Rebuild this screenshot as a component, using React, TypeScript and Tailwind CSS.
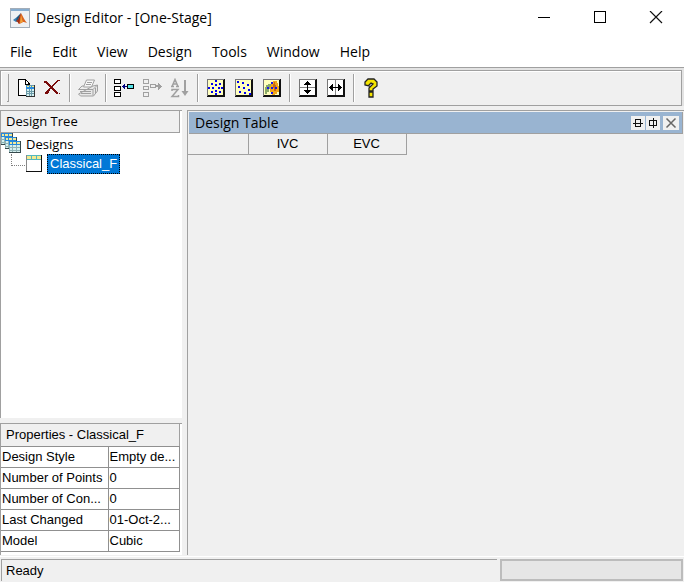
import type { ReactNode } from 'react';

const UI = "font-['Open_Sans','Noto_Sans',sans-serif]";
const ARIAL = "font-['Liberation_Sans',Arial,sans-serif]";

function Art({ children, size = 20, className = '' }: { children: ReactNode; size?: number; className?: string }) {
  return (
    <svg width={size} height={size} viewBox={`0 0 ${size} ${size}`} fill="none" shapeRendering="crispEdges" className={`shrink-0 ${className}`} aria-hidden="true">
      {children}
    </svg>
  );
}

function MatlabLogo() {
  return (
    <svg width="20" height="20" viewBox="0 0 20 20" className="shrink-0" aria-hidden="true">
      <rect x=".5" y=".5" width="19" height="19" fill="#eef1f4" stroke="#a3adb8" />
      <path d="M1 1h18v2H1z" fill="#86add0" />
      <path d="M3 12l4-3 2 2-3 3z" fill="#397fb5" />
      <path d="M7 9l4-4-1 5-3 4-1-1z" fill="#23577d" />
      <path d="M11 5c2 3 3 7 6 10-2-1-3-1-4-1-1 1-2 1-4 2-1-2-2-3-3-3 2 0 3-3 5-8z" fill="#db6421" />
      <path d="M11 5c-1 4-1 7-2 11-1-2-2-3-3-3 2 0 3-3 5-8z" fill="#9d2c18" />
      <path d="M11 7c1 3 1 5 2 7l-3 1z" fill="#f0a43a" />
    </svg>
  );
}

const NewIcon = () => (
  <Art>
    <path d="M2 1h8v1h1v1h1v1h1v1h1v13H2z" fill="#000" />
    <path d="M3 2h6v5h4v10H3z" fill="#fff" />
    <path d="M10 3h1v1h1v2h-2z" fill="#fff" />
    <path d="M10 7h9v12h-9z" fill="#333" />
    <path d="M10 7h8v11h-8z" fill="#6b9aa8" />
    <path d="M10 8h8v3h-8z" fill="#2d8fe0" />
    <path d="M11 11h2v2h-2zM14 11h1v2h-1zM16 11h2v2h-2zM11 14h2v1h-2zM14 14h1v1h-1zM16 14h2v1h-2zM11 16h2v2h-2zM14 16h1v2h-1zM16 16h2v2h-2z" fill="#d6f0f0" />
    <path d="M11 8h2v1h-2zM14 8h1v1h-1zM16 8h2v1h-2z" fill="#ffee8a" />
  </Art>
);

const DeleteIcon = () => (
  <Art>
    <path d="M2 3h3v1h1v1h1v1h1v1h1v1h1v1h1v1h1v1h1v1h1v1h1v1h1v2h-2v-1h-1v-1h-1v-1h-1v-1h-1v-1h-1v-1H8V9H7V8H6V7H5V6H4V5H2zM15 2h3v1h-2v1h-1v1h-1v1h-1v1h-1v1h-1v1h-1v1H9v1H8v2H7v2H6v1H3v-2h1v-1h1v-1h1v-1h1v-1h1V9h1V8h1V7h1V6h1V5h1V4h1V3h1z" fill="#780a0a" />
    <path d="M17 15h1v1h-1z" fill="#780a0a" />
  </Art>
);

const PrintIcon = () => (
  <svg width="20" height="20" viewBox="0 0 20 20" fill="none" stroke="#a0a0a0" className="shrink-0" aria-hidden="true">
    <path d="M5.500 9l3-7h8l-3 7z" fill="#f8f8f8" />
    <path d="M9 4.500h5M8 6.500h5" />
    <path d="M.5 11.500L4 8h2M15 8l4.500-1v6l-4 5h-13l-2-2z" fill="#e8e8e8" />
    <path d="M.5 11.500H15l4.500-4.500M15 11.500v6M2 13.500h11M3 15.500h10M17.500 10v5" />
  </svg>
);

const MergeIcon = () => (
  <Art>
    <path d="M0 1h7v5H0zM0 8h7v5H0zM0 14h7v5H0zM13 6h7v5h-7z" fill="#000" />
    <path d="M1 2h5v3H1zM1 9h5v3H1zM1 15h5v3H1z" fill="#fff" />
    <path d="M14 7h5v3h-5z" fill="#54e2e8" />
    <path d="M8 8h1V7h1V6h1v2h2v1h-2v2h-1v-1H9V9H8z" fill="#000080" />
  </Art>
);

const SplitIcon = () => (
  <Art>
    <path d="M1.500 1.500h5v4h-5zM1.500 8.500h5v3h-5zM1.500 14.500h5v4h-5zM8.500 6.500h5v3h-5z" stroke="#a0a0a0" />
    <path d="M14 7h2V5h1v1h1v1h1v1h1v1h-1v1h-1v1h-1v1h-1V9h-2z" fill="#a0a0a0" />
  </Art>
);

const SortIcon = () => (
  <svg width="20" height="20" viewBox="0 0 20 20" fill="none" stroke="#a0a0a0" strokeWidth="1.500" className="shrink-0" aria-hidden="true">
    <path d="M2 8.500L5 1.500l3 7M3 6h4M1 8.500h3M6 8.500h3M2 13v-1.500h6L2 18.500h6.500V17" />
    <path d="M15 2v12" strokeWidth="2" />
    <path d="M11.500 13h7L15 18z" fill="#a0a0a0" stroke="none" />
  </svg>
);

function Tile({ children, fill = '#ffffbe' }: { children: ReactNode; fill?: string }) {
  return (
    <Art>
      <path d="M1 1h18v18H1z" fill="#111" />
      <path d="M1 1h17v1H2v16H1z" fill="#777" />
      <path d="M2 2h15v15H2z" fill={fill} />
      {children}
    </Art>
  );
}

const GridPointsIcon = () => (
  <Tile>
    <path d="M9 2h2v2H9zM5 5h2v2H5zM13 5h2v2h-2zM9 6h2v2H9zM2 9h2v2H2zM6 9h2v2H6zM12 9h2v2h-2zM15 9h2v2h-2zM9 12h2v2H9zM5 13h2v2H5zM13 13h2v2h-2zM9 15h2v2H9z" fill="#0000f0" />
  </Tile>
);
const ScatterPointsIcon = () => (
  <Tile>
    <path d="M3 3h2v2H3zM8 4h2v2H8zM13 6h2v2h-2zM4 8h2v2H4zM9 9h2v2H9zM14 11h2v2h-2zM5 13h2v2H5zM10 14h2v2h-2zM15 15h2v2h-2z" fill="#0000f0" />
  </Tile>
);
const OptimalPointsIcon = () => (
  <Tile>
    <path d="M9 4h2V3h4v2h1v3h1v6h-2v2h-2v1h-3v-3H8V8h1z" fill="#f2a719" />
    <path d="M3 9h1V7h2V6h3v2H8v3H7v3H5v2H3z" fill="#8aa967" />
    <path d="M12 4h1v3h1v6h-2v-3h-1V6h1z" fill="#c96a12" />
    <path d="M9 4h2v2H9zM5 9h2v2H5zM9 9h2v2H9zM13 9h2v2h-2zM9 14h2v2H9z" fill="#1616e8" />
  </Tile>
);

const SplitVerticalIcon = () => (
  <Tile fill="#fff">
    <path d="M2 9h15v1H2z" fill="#888" />
    <path d="M9 3h1v1h1v1h1v1h1v1h-3v5h3v1h-1v1h-1v1h-1v1H9v-1H8v-1H7v-1H6v-1h3V7H6V6h1V5h1V4h1z" fill="#000" />
  </Tile>
);
const SplitHorizontalIcon = () => (
  <Tile fill="#fff">
    <path d="M9 2h1v15H9z" fill="#888" />
    <path d="M3 9h1V8h1V7h1V6h1v3h5V6h1v1h1v1h1v1h1v1h-1v1h-1v1h-1v1h-1v-3H7v3H6v-1H5v-1H4v-1H3z" fill="#000" />
  </Tile>
);

const HelpIcon = () => (
  <svg width="20" height="20" viewBox="0 0 20 20" fill="none" className="shrink-0" aria-hidden="true">
    <path d="M3 7V4l3-3h6l3 3v4l-4 3v2H7v-3l4-4-2-1-2 2v1zM7 14h4v5H7z" fill="#f5e400" stroke="#222" strokeWidth="1.300" />
  </svg>
);

function TableGlyph({ x, y }: { x: number; y: number }) {
  return (
    <g transform={`translate(${x} ${y})`}>
      <path d="M0 0h12v12H0z" fill="#35484b" />
      <path d="M0 0h11v11H0z" fill="#8fb2b5" />
      <path d="M0 0h11v4H0z" fill="#2689dc" />
      <path d="M1 1h2v2H1zM4 1h3v2H4zM8 1h3v2H8z" fill="#f3e998" />
      <path d="M1 4h2v2H1zM4 4h3v2H4zM8 4h3v2H8zM1 7h2v2H1zM4 7h3v2H4zM8 7h3v2H8zM1 10h2v1H1zM4 10h3v1H4zM8 10h3v1H8z" fill="#d6f0f0" />
    </g>
  );
}

function ToolButton({ label, disabled, children }: { label: string; disabled?: boolean; children: ReactNode }) {
  return (
    <button type="button" aria-label={label} disabled={disabled} className="flex h-7 w-7 items-center justify-center">
      {children}
    </button>
  );
}

const Separator = () => <span className="mx-[3px] h-7 w-0.5 border-r border-l border-r-white border-l-[#a0a0a0]" />;

const menus = ['File', 'Edit', 'View', 'Design', 'Tools', 'Window', 'Help'];

const properties = [
  ['Design Style', 'Empty de...'],
  ['Number of Points', '0'],
  ['Number of Con...', '0'],
  ['Last Changed', '01-Oct-2...'],
  ['Model', 'Cubic'],
];

export default function App() {
  return (
    <div className={`flex min-h-screen flex-col bg-[#f0f0f0] text-black ${ARIAL}`}>
      <header className={`bg-white ${UI}`}>
        <div className="flex h-9 items-center pr-1 pl-2.5">
          <MatlabLogo />
          <h1 className="ml-1.5 grow text-[14px] leading-5">Design Editor - [One-Stage]</h1>
          <div className="flex gap-2">
            <button type="button" aria-label="Minimize" className="flex h-8 w-12 items-center justify-center">
              <Art size={14}><path d="M1 6.500h12" stroke="#000" /></Art>
            </button>
            <button type="button" aria-label="Maximize" className="flex h-8 w-12 items-center justify-center">
              <Art size={14}><path d="M1.500 .5h11v11h-11z" stroke="#000" /></Art>
            </button>
            <button type="button" aria-label="Close" className="flex h-8 w-12 items-center justify-center">
              <svg width="14" height="14" viewBox="0 0 14 14" stroke="#111" strokeWidth="1.200" aria-hidden="true"><path d="M1 0l12 12M13 0L1 12" /></svg>
            </button>
          </div>
        </div>
        <nav className="flex h-[31px] items-center gap-5 pl-2.5 text-[14px] leading-5">
          {menus.map((m) => (
            <button type="button" key={m}>{m}</button>
          ))}
        </nav>
      </header>

      <div className="border-t border-[#a0a0a0] bg-[#e3e3e3] pt-0.5">
        <div role="toolbar" className="mr-0.5 flex h-9 items-center border border-[#a0a0a0] bg-[#f0f0f0] pl-1.5 shadow-[inset_1px_1px_0_#fff]">
          <span className="mr-px h-7 w-0.5 border-r border-b border-[#a0a0a0]" />
          <ToolButton label="New design"><span className="pl-1"><NewIcon /></span></ToolButton>
          <ToolButton label="Delete design"><DeleteIcon /></ToolButton>
          <Separator />
          <ToolButton label="Print" disabled><PrintIcon /></ToolButton>
          <Separator />
          <ToolButton label="Merge designs"><MergeIcon /></ToolButton>
          <ToolButton label="Split design" disabled><SplitIcon /></ToolButton>
          <ToolButton label="Sort points" disabled><SortIcon /></ToolButton>
          <Separator />
          <ToolButton label="Classical design"><GridPointsIcon /></ToolButton>
          <ToolButton label="Space-filling design"><ScatterPointsIcon /></ToolButton>
          <ToolButton label="Optimal design"><OptimalPointsIcon /></ToolButton>
          <Separator />
          <ToolButton label="Split view vertically"><SplitVerticalIcon /></ToolButton>
          <ToolButton label="Split view horizontally"><SplitHorizontalIcon /></ToolButton>
          <Separator />
          <ToolButton label="Help"><HelpIcon /></ToolButton>
        </div>
      </div>

      <main className="flex grow gap-[5px] pt-1">
        <div className="flex w-[182px] shrink-0 flex-col gap-[5px]">
          <section className="flex grow flex-col border-t border-l border-[#a0a0a0] bg-white">
            <h2 className={`mr-0.5 h-[22px] border-r border-b border-[#a0a0a0] bg-[#f0f0f0] pl-[5px] text-[13px] leading-5 ${UI}`}>Design Tree</h2>
            <ul className="text-[13px] leading-5">
              <li>
                <div className="flex h-[21px] items-center">
                  <Art size={21}>
                    <TableGlyph x={0} y={0} />
                    <TableGlyph x={4} y={4} />
                    <TableGlyph x={8} y={8} />
                  </Art>
                  <span className={`pl-1 ${UI}`}>Designs</span>
                </div>
                <ul>
                  <li className="flex h-5 items-center pl-2.5">
                    <span className="mb-2 h-3 w-3.5 border-b border-l border-dotted border-[#808080]" />
                    <Art size={18} className="ml-px">
                      <path d="M0 0h16v17H0z" fill="#111" />
                      <path d="M0 0h15v16H0z" fill="#888" />
                      <path d="M1 1h14v15H1z" fill="#fff" />
                      <path d="M1 0h14v5H1z" fill="#54b8c0" />
                      <path d="M1 1h4v3H1zM6 1h4v3H6zM11 1h4v3h-4z" fill="#f3ea91" />
                    </Art>
                    <button type="button" className="ml-[3px] h-5 border border-dotted border-[#ff8728] bg-[#0078d7] px-0.5 text-[13px] leading-[18px] text-white outline-1 outline-dotted -outline-offset-1 outline-black">
                      Classical_F
                    </button>
                  </li>
                </ul>
              </li>
            </ul>
          </section>

          <section className="border-t border-l border-[#a0a0a0] bg-white pb-[3px]">
            <h2 className="mr-0.5 h-[22px] border-r border-[#a0a0a0] bg-[#f0f0f0] pl-[5px] text-[13px] leading-[21px]">Properties - Classical_F</h2>
            <table className="w-[179px] table-fixed border-collapse text-[13px] leading-5">
              <tbody>
                {properties.map(([name, value]) => (
                  <tr key={name}>
                    <th scope="row" className="w-[107px] border-t border-r border-b border-[#909090] p-0 pl-px text-left font-normal whitespace-nowrap">{name}</th>
                    <td className="border border-[#909090] p-0 pl-px whitespace-nowrap">{value}</td>
                  </tr>
                ))}
              </tbody>
            </table>
          </section>
        </div>

        <section className="grow border-t border-l border-[#a0a0a0]">
          <div className="mt-px mr-px ml-px flex h-[22px] items-center border-r border-b border-[#a0a0a0] bg-[#99b4d1] pr-[3px] pl-1.5">
            <h2 className={`grow text-[14px] leading-5 ${UI}`}>Design Table</h2>
            <div className="flex gap-px">
              <button type="button" aria-label="Split horizontally" className="bg-[#f0f0f0]">
                <Art size={14}><path d="M4.500 3.500h5v7h-5zM2 7.500h10" stroke="#111" /></Art>
              </button>
              <button type="button" aria-label="Split vertically" className="bg-[#f0f0f0]">
                <Art size={14}><path d="M3.500 4.500h7v5h-7zM7.500 2v10" stroke="#111" /></Art>
              </button>
              <button type="button" aria-label="Close view" className="ml-0.5 flex h-3.5 w-4 items-center justify-center bg-[#f0f0f0]">
                <svg width="12" height="12" viewBox="0 0 12 12" stroke="#666" strokeWidth="1.500" aria-hidden="true"><path d="M1.500 1.500l9 9M10.500 1.500l-9 9" /></svg>
              </button>
            </div>
          </div>
          <table className="table-fixed border-collapse text-[13px] leading-5">
            <thead>
              <tr>
                <th aria-label="Point" className="w-[60px] border-r border-b border-[#a0a0a0] p-0" />
                <th className="w-[79px] border-r border-b border-[#a0a0a0] p-0 font-normal">IVC</th>
                <th className="w-[79px] border-r border-b border-[#a0a0a0] p-0 font-normal">EVC</th>
              </tr>
            </thead>
          </table>
        </section>
      </main>

      <footer className="mt-px flex h-[26px] gap-[3px] border-t border-white pt-0.5 pr-px pb-px pl-px">
        <p className="grow border-t border-l border-[#a0a0a0] pl-1 text-[13px] leading-[22px]">Ready</p>
        <div className="w-[183px] border-2 border-[#bcbcbc] bg-[#e6e6e6]" />
      </footer>
    </div>
  );
}
